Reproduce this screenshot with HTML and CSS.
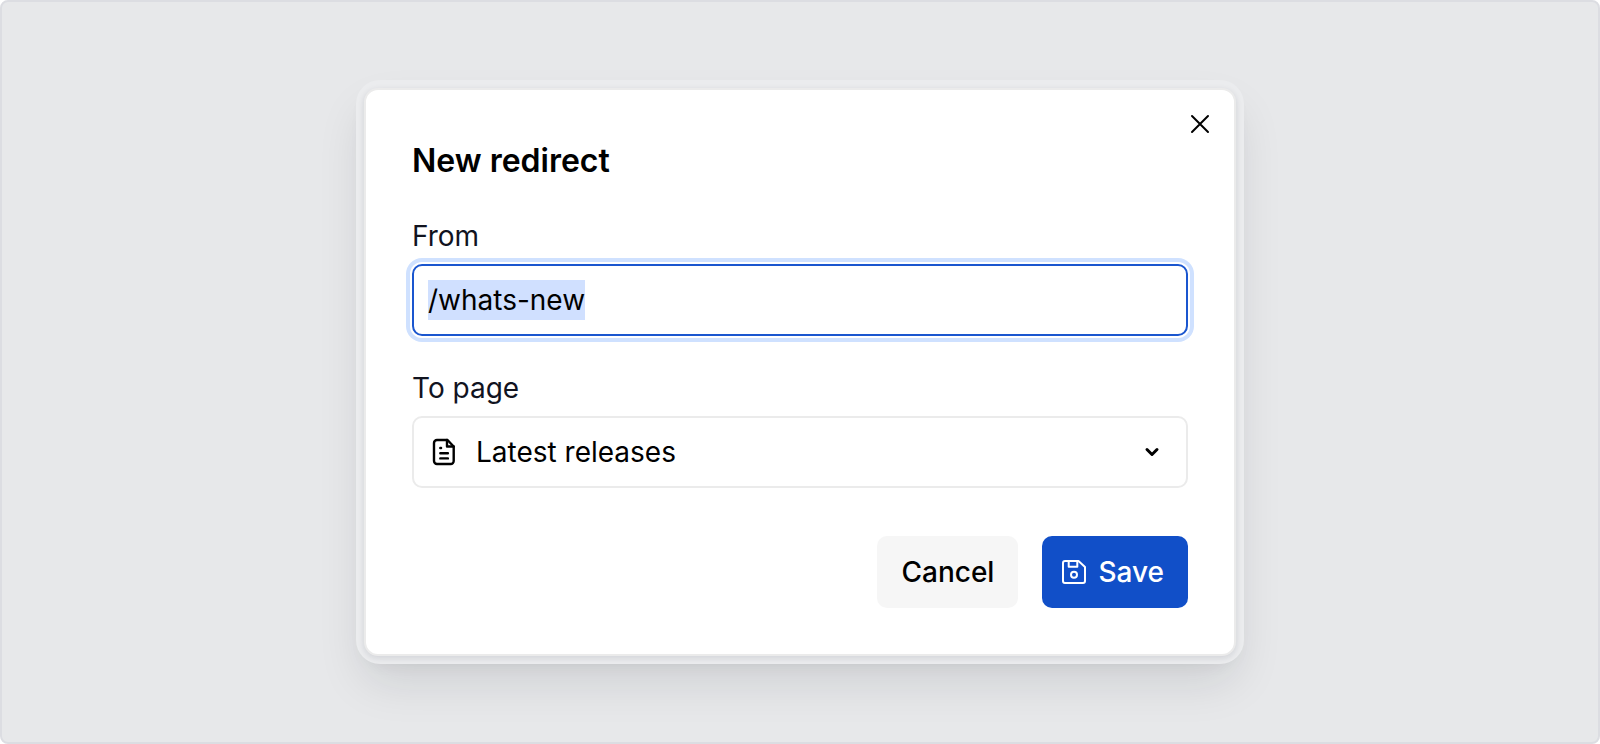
FILE: index.html
```html
<!DOCTYPE html>
<html lang="en">
	<head>
		<meta charset="utf-8">
		<title>New redirect</title>
		<link rel="stylesheet" href="styles.css">
	</head>
	<body>
		<main class="stage">
			<div class="frame">
				<form class="dialog" role="dialog" aria-labelledby="dialog-title">
					<button type="button" class="close" aria-label="Close">
						<svg width="20" height="20" viewBox="0 0 20 20"><path d="M2 2L18 18M18 2L2 18"/></svg>
					</button>
					<h1 id="dialog-title">New redirect</h1>
					<div class="field">
						<label for="from">From</label>
						<div class="text-box">
							<input type="text" id="from" value="/whats-new" autocomplete="off" spellcheck="false" autofocus>
						</div>
					</div>
					<div class="field">
						<label for="to">To page</label>
						<div class="select">
							<svg class="page-icon" width="32" height="32" viewBox="0 0 32 32">
								<path d="M9 4H19.5L25.7 10.5V25a3 3 0 0 1-3 3H9a3 3 0 0 1-3-3V7a3 3 0 0 1 3-3Z"/>
								<path d="M19 4V10.5H25.7M12.3 12h.8M12.3 17.3h7.6M12.3 22.4h7.6"/>
							</svg>
							<select id="to">
								<option>Latest releases</option>
							</select>
							<svg class="chevron" width="16" height="16" viewBox="0 0 16 16"><path d="M3 5.5L8 10.5L13 5.5"/></svg>
						</div>
					</div>
					<div class="actions">
						<button type="button" class="btn">Cancel</button>
						<button type="submit" class="btn primary">
							<svg width="28" height="28" viewBox="0 0 28 28">
								<path d="M5 3H18.5L25 9V23a2 2 0 0 1-2 2H5a2 2 0 0 1-2-2V5a2 2 0 0 1 2-2Z"/>
								<path d="M8.7 3V8.7H17.3V3"/>
								<circle cx="14" cy="16.8" r="3"/>
							</svg>
							Save
						</button>
					</div>
				</form>
			</div>
		</main>
		<script>
			document.querySelector("#from").focus();
			document.querySelector("#from").select();
		</script>
	</body>
</html>
```
FILE: styles.css
```css
*{margin: 0;padding: 0;box-sizing: border-box;}
body{
	background-color: #fff;
	font-family: Inter, "Liberation Sans", sans-serif;
	font-size: 28px;
	line-height: 40px;
	color: #000;
}
.stage{
	min-height: 100vh;
	display: flex;
	align-items: center;
	justify-content: center;
	padding: 40px;
	border: 2px solid #dcdde2;
	border-radius: 8px;
	background-color: #e7e8ea;
}
.frame{
	width: 100%;
	max-width: 888px;
	padding: 8px;
	border-radius: 24px;
	background-color: #ebecee;
	box-shadow: 0 24px 48px -8px rgba(20,24,32,0.12), 0 8px 16px -8px rgba(20,24,32,0.06);
}
.dialog{
	position: relative;
	padding: 46px;
	border: 2px solid #ebebeb;
	border-radius: 14px;
	background-color: #fff;
	box-shadow: 0 2px 6px rgba(20,24,48,0.12);
}
svg{
	fill: none;
	stroke: currentColor;
	stroke-width: 2;
	stroke-linecap: round;
	stroke-linejoin: round;
}
button,input,select{
	font: inherit;
	color: inherit;
}
.close{
	position: absolute;
	top: 14px;
	right: 14px;
	width: 40px;
	height: 40px;
	display: flex;
	align-items: center;
	justify-content: center;
	border: 0;
	background: none;
	cursor: pointer;
}
h1{
	padding-top: 2px;
	font-size: 32px;
	line-height: 46px;
	font-weight: 600;
}
.field{
	display: flex;
	flex-direction: column;
	gap: 8px;
	margin-top: 32px;
}
label{
	color: #11131f;
}
.text-box,select{
	width: 100%;
	height: 72px;
	border: 2px solid #ebebeb;
	border-radius: 10px;
	background-color: #fff;
}
.text-box{
	display: flex;
	align-items: center;
	padding: 0 14px;
}
.text-box:focus-within{
	border-color: #1a56cf;
	box-shadow: 0 0 0 2px #fff, 0 0 0 6px #cfe1ff;
}
input{
	field-sizing: content;
	max-width: 100%;
	height: 40px;
	border: 0;
	outline: none;
}
input:focus{
	background-color: #d0e0ff;
}
input::selection{
	background-color: #d0e0ff;
	color: #000;
}
.select{
	position: relative;
}
select{
	display: block;
	padding: 0 62px;
	outline: none;
	appearance: none;
}
.page-icon{
	position: absolute;
	left: 16px;
	top: 20px;
	stroke-width: 2.4;
}
.chevron{
	position: absolute;
	right: 28px;
	top: 28px;
	stroke-width: 3;
}
.page-icon,.chevron{
	pointer-events: none;
}
.actions{
	display: flex;
	justify-content: flex-end;
	gap: 24px;
	margin-top: 48px;
}
.btn{
	display: flex;
	align-items: center;
	gap: 10px;
	height: 72px;
	padding: 0 24px;
	border: 0;
	border-radius: 10px;
	background-color: #f6f6f6;
	font-weight: 500;
	cursor: pointer;
}
.primary{
	padding-left: 18px;
	background-color: #114fc8;
	color: #fff;
}
```
